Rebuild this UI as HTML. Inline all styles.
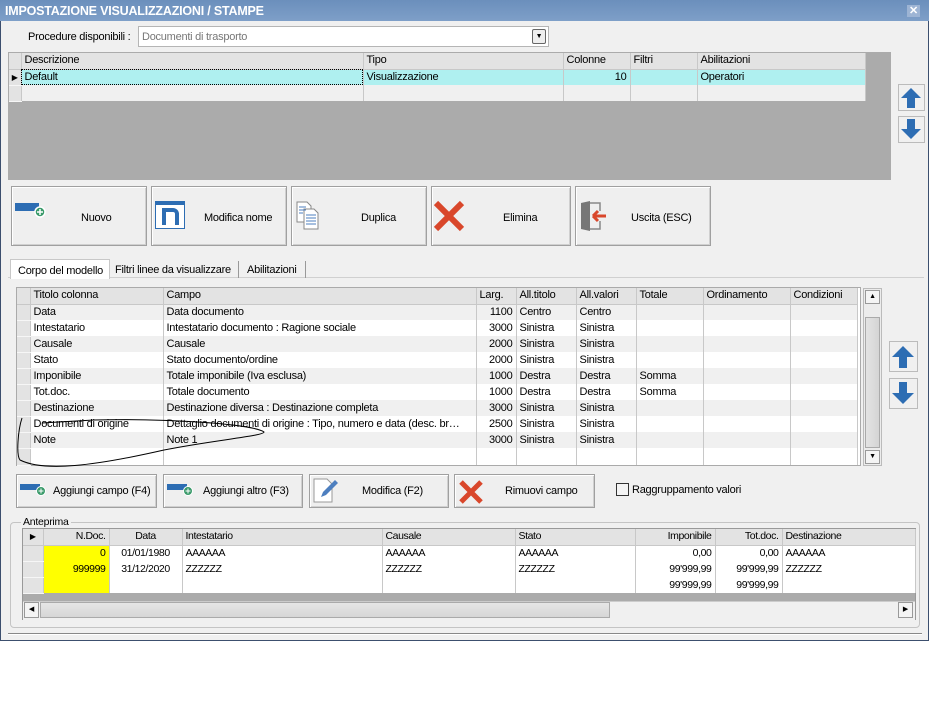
<!DOCTYPE html>
<html><head><meta charset="utf-8"><style>
*{box-sizing:border-box;margin:0;padding:0}
body{width:929px;height:703px;background:#fff;font-family:"Liberation Sans",sans-serif;font-size:11px;letter-spacing:-0.25px;color:#000;position:relative;overflow:hidden}
.a{position:absolute}
#win{left:0;top:0;width:929px;height:641px;background:#f0f0f0;border:1px solid #3c4f6e;border-top:none}
#title{left:0;top:0;width:929px;height:21px;background:linear-gradient(#6b8fbc,#7e9fc8);color:#fff;font-weight:bold;font-size:12.5px;line-height:22px;padding-left:5px;letter-spacing:-0.2px}
.btn{position:absolute;background:#efefef;border:1px solid #a0a0a0;box-shadow:inset 1px 1px 0 #fff,inset -1px -1px 0 #d0d0d0}
.btn span{position:absolute;top:50%;transform:translateY(-50%)}
table{border-collapse:collapse;table-layout:fixed;position:absolute}
td{border-right:1px solid #c8c8c8;height:16px;padding:0 3px;white-space:nowrap;overflow:hidden;line-height:15px}
tr.h td{background:#e3e3e3;border-bottom:1px solid #c8c8c8}
td.i{background:#e3e3e3;border-bottom:1px solid #f6f6f6;padding:0}
.r{text-align:right}
.sm td{font-size:10.5px;letter-spacing:-.4px}
</style></head><body>
<div id="win" class="a"></div>
<div id="title" class="a">IMPOSTAZIONE VISUALIZZAZIONI / STAMPE</div>
<div class="a" style="left:907px;top:5px;width:13px;height:12px;background:#9db4d4;color:#fff;font-weight:bold;font-size:11px;line-height:12px;text-align:center">✕</div>

<div class="a" style="left:28px;top:31px">Procedure disponibili :</div>
<div class="a" style="left:138px;top:26px;width:411px;height:21px;background:#fff;border:1px solid #b5b5b5;color:#777;padding:4px 3px">Documenti di trasporto</div>
<div class="a" style="left:532px;top:29px;width:14px;height:15px;border:1px solid #666;border-radius:2px;background:#eee;font-size:7px;text-align:center;line-height:13px">▼</div>

<div class="a" style="left:8px;top:52px;width:883px;height:128px;background:#ababab"></div>
<table style="left:9px;top:53px;width:856px">
<col style="width:12px"><col style="width:342px"><col style="width:200px"><col style="width:67px"><col style="width:67px"><col style="width:168px">
<tr class="h"><td class="i"></td><td>Descrizione</td><td>Tipo</td><td>Colonne</td><td>Filtri</td><td>Abilitazioni</td></tr>
<tr style="background:#aff0f0"><td class="i" style="font-size:8px;text-align:center">▶</td><td style="outline:1px dotted #000;outline-offset:-1px">Default</td><td>Visualizzazione</td><td class="r">10</td><td></td><td>Operatori</td></tr>
<tr style="background:#f0f0f0"><td class="i"></td><td></td><td></td><td></td><td></td><td></td></tr>
</table>

<svg class="a" style="left:898px;top:84px" width="27" height="60"><rect x=".5" y=".5" width="26" height="26" fill="#f0f0f0" stroke="#bbb"/><path d="M13 4 L23 14 H17 V24 H9 V14 H3Z" fill="#2d6db3"/><rect x=".5" y="32.5" width="26" height="26" fill="#f0f0f0" stroke="#bbb"/><path d="M13 55 L23 45 H17 V35 H9 V45 H3Z" fill="#2d6db3"/></svg>

<div class="btn" style="left:11px;top:186px;width:136px;height:60px"><svg class="a" style="left:3px;top:12px" width="32" height="22"><rect x="0" y="4" width="24" height="8" fill="#2d6db3"/><circle cx="25" cy="13" r="5" fill="#3a9a6a" stroke="#fff" stroke-width="1.5"/><path d="M22 13h6M25 10v6" stroke="#fff" stroke-width="1.5"/></svg><span style="left:69px;top:31px">Nuovo</span></div>
<div class="btn" style="left:151px;top:186px;width:136px;height:60px"><svg class="a" style="left:3px;top:14px" width="32" height="30"><rect x=".5" y=".5" width="29" height="27" fill="#fff" stroke="#2d6db3"/><rect x="0" y="0" width="30" height="4" fill="#2d6db3"/><path d="M9 24V9h9a4 4 0 0 1 4 4v11" fill="none" stroke="#2d6db3" stroke-width="4"/></svg><span style="left:52px;top:31px">Modifica nome</span></div>
<div class="btn" style="left:291px;top:186px;width:136px;height:60px"><svg class="a" style="left:4px;top:14px" width="32" height="30"><path d="M1 1h10l4 4v16H1z" fill="#fff" stroke="#888"/><path d="M8 8h10l4 4v16H8z" fill="#fff" stroke="#888"/><path d="M3 6h7M3 9h7M3 12h4M10 14h10M10 17h10M10 20h10M10 23h10" stroke="#4d7fbf"/></svg><span style="left:69px;top:31px">Duplica</span></div>
<div class="btn" style="left:431px;top:186px;width:140px;height:60px"><svg class="a" style="left:0px;top:12px" width="34" height="34"><path d="M4 4L30 30M30 4L4 30" stroke="#d9472b" stroke-width="6"/></svg><span style="left:71px;top:31px">Elimina</span></div>
<div class="btn" style="left:575px;top:186px;width:136px;height:60px"><svg class="a" style="left:3px;top:12px" width="32" height="34"><path d="M2 4L11 2V32L2 30Z" fill="#777"/><path d="M11 4h10v8M11 30h10v-8" fill="none" stroke="#888" stroke-width="1.5"/><path d="M14 17h13M14 17l5-5M14 17l5 5" stroke="#d9472b" stroke-width="3" fill="none"/></svg><span style="left:55px;top:31px">Uscita (ESC)</span></div>

<div class="a" style="left:8px;top:277px;width:916px;height:1px;background:#d0d0d0"></div>
<div class="a" style="left:10px;top:259px;width:100px;height:20px;background:#fff;border:1px solid #c8c8c8;border-bottom:none;padding:5px 0 0 7px">Corpo del modello</div>
<div class="a" style="left:111px;top:261px;width:128px;height:17px;border-right:1px solid #999;padding:3px 0 0 4px">Filtri linee da visualizzare</div>
<div class="a" style="left:241px;top:261px;width:65px;height:17px;border-right:1px solid #999;padding:3px 0 0 6px">Abilitazioni</div>

<div class="a" style="left:16px;top:287px;width:845px;height:179px;background:#fff;border:1px solid #aaa"></div>
<table style="left:17px;top:288px;width:840px">
<col style="width:13px"><col style="width:133px"><col style="width:313px"><col style="width:40px"><col style="width:60px"><col style="width:60px"><col style="width:67px"><col style="width:87px"><col style="width:67px">
<tr class="h"><td class="i"></td><td>Titolo colonna</td><td>Campo</td><td>Larg.</td><td>All.titolo</td><td>All.valori</td><td>Totale</td><td>Ordinamento</td><td>Condizioni</td></tr>
<tr style="background:#f0f0f0"><td class="i"></td><td>Data</td><td>Data documento</td><td class="r">1100</td><td>Centro</td><td>Centro</td><td></td><td></td><td></td></tr>
<tr style="background:#fff"><td class="i"></td><td>Intestatario</td><td>Intestatario documento : Ragione sociale</td><td class="r">3000</td><td>Sinistra</td><td>Sinistra</td><td></td><td></td><td></td></tr>
<tr style="background:#f0f0f0"><td class="i"></td><td>Causale</td><td>Causale</td><td class="r">2000</td><td>Sinistra</td><td>Sinistra</td><td></td><td></td><td></td></tr>
<tr style="background:#fff"><td class="i"></td><td>Stato</td><td>Stato documento/ordine</td><td class="r">2000</td><td>Sinistra</td><td>Sinistra</td><td></td><td></td><td></td></tr>
<tr style="background:#f0f0f0"><td class="i"></td><td>Imponibile</td><td>Totale imponibile (Iva esclusa)</td><td class="r">1000</td><td>Destra</td><td>Destra</td><td>Somma</td><td></td><td></td></tr>
<tr style="background:#fff"><td class="i"></td><td>Tot.doc.</td><td>Totale documento</td><td class="r">1000</td><td>Destra</td><td>Destra</td><td>Somma</td><td></td><td></td></tr>
<tr style="background:#f0f0f0"><td class="i"></td><td>Destinazione</td><td>Destinazione diversa : Destinazione completa</td><td class="r">3000</td><td>Sinistra</td><td>Sinistra</td><td></td><td></td><td></td></tr>
<tr style="background:#fff"><td class="i"></td><td>Documenti di origine</td><td>Dettaglio documenti di origine : Tipo, numero e data (desc. br…</td><td class="r">2500</td><td>Sinistra</td><td>Sinistra</td><td></td><td></td><td></td></tr>
<tr style="background:#f0f0f0"><td class="i"></td><td>Note</td><td>Note 1</td><td class="r">3000</td><td>Sinistra</td><td>Sinistra</td><td></td><td></td><td></td></tr>
<tr style="background:#fff"><td class="i" style="height:17px"></td><td></td><td></td><td></td><td></td><td></td><td></td><td></td><td></td></tr>
</table>
<div class="a" style="left:863px;top:288px;width:19px;height:178px;background:#ececec;border:1px solid #bbb"></div>
<div class="a" style="left:865px;top:290px;width:15px;height:14px;border:1px solid #999;background:#f4f4f4;font-size:7px;text-align:center;line-height:12px">▲</div>
<div class="a" style="left:865px;top:317px;width:15px;height:131px;border:1px solid #aaa;background:linear-gradient(90deg,#e4e4e4,#d4d4d4)"></div>
<div class="a" style="left:865px;top:450px;width:15px;height:14px;border:1px solid #999;background:#f4f4f4;font-size:7px;text-align:center;line-height:12px">▼</div>
<svg class="a" style="left:889px;top:341px" width="29" height="68"><rect x=".5" y=".5" width="28" height="30" fill="#f0f0f0" stroke="#bbb"/><path d="M14 5 L25 16 H18 V27 H10 V16 H3Z" fill="#2d6db3"/><rect x=".5" y="37.5" width="28" height="30" fill="#f0f0f0" stroke="#bbb"/><path d="M14 63 L25 52 H18 V41 H10 V52 H3Z" fill="#2d6db3"/></svg>

<svg class="a" style="left:14px;top:410px" width="270" height="62"><path d="M8 8 C4 20 2 45 6 50 C30 62 80 56 150 40 C200 30 250 26 250 22 C240 14 150 8 80 10 C60 11 45 12 28 13" fill="none" stroke="#000" stroke-width="1"/></svg>

<div class="btn" style="left:16px;top:474px;width:141px;height:34px"><svg class="a" style="left:3px;top:7px" width="28" height="16"><rect x="0" y="2" width="20" height="6" fill="#2d6db3"/><circle cx="21" cy="9" r="4.5" fill="#3a9a6a" stroke="#fff"/><path d="M18.5 9h5M21 6.5v5" stroke="#fff"/></svg><span style="left:36px">Aggiungi campo (F4)</span></div>
<div class="btn" style="left:163px;top:474px;width:140px;height:34px"><svg class="a" style="left:3px;top:7px" width="28" height="16"><rect x="0" y="2" width="20" height="6" fill="#2d6db3"/><circle cx="21" cy="9" r="4.5" fill="#3a9a6a" stroke="#fff"/><path d="M18.5 9h5M21 6.5v5" stroke="#fff"/></svg><span style="left:39px">Aggiungi altro (F3)</span></div>
<div class="btn" style="left:309px;top:474px;width:140px;height:34px"><svg class="a" style="left:3px;top:3px" width="26" height="26"><path d="M1 1h13l5 5v18H1z" fill="#fff" stroke="#999"/><path d="M8 19l2-5 12-12 3 3-12 12z" fill="#4d7fbf"/></svg><span style="left:52px">Modifica (F2)</span></div>
<div class="btn" style="left:454px;top:474px;width:141px;height:34px"><svg class="a" style="left:2px;top:3px" width="28" height="28"><path d="M4 4L24 24M24 4L4 24" stroke="#d9472b" stroke-width="5"/></svg><span style="left:50px">Rimuovi campo</span></div>
<div class="a" style="left:616px;top:483px;width:13px;height:13px;border:1px solid #333;background:#f4f4f4"></div>
<div class="a" style="left:632px;top:484px">Raggruppamento valori</div>

<div class="a" style="left:10px;top:522px;width:910px;height:106px;border:1px solid #c4c4c4;border-radius:4px"></div>
<div class="a" style="left:21px;top:516px;background:#f0f0f0;padding:0 2px;font-size:10.5px">Anteprima</div>
<div class="a" style="left:22px;top:528px;width:894px;height:92px;background:#ababab;border:1px solid #999"></div>
<table class="sm" style="left:23px;top:529px;width:892px">
<col style="width:20px"><col style="width:66px"><col style="width:73px"><col style="width:200px"><col style="width:133px"><col style="width:120px"><col style="width:80px"><col style="width:67px"><col style="width:133px">
<tr class="h"><td class="i" style="font-size:8px;text-align:center">▶</td><td class="r">N.Doc.</td><td style="text-align:center">Data</td><td>Intestatario</td><td>Causale</td><td>Stato</td><td class="r">Imponibile</td><td class="r">Tot.doc.</td><td>Destinazione</td></tr>
<tr style="background:#fff"><td class="i"></td><td class="r" style="background:#ffff00">0</td><td style="text-align:center">01/01/1980</td><td>AAAAAA</td><td>AAAAAA</td><td>AAAAAA</td><td class="r">0,00</td><td class="r">0,00</td><td>AAAAAA</td></tr>
<tr style="background:#fff"><td class="i"></td><td class="r" style="background:#ffff00">999999</td><td style="text-align:center">31/12/2020</td><td>ZZZZZZ</td><td>ZZZZZZ</td><td>ZZZZZZ</td><td class="r">99'999,99</td><td class="r">99'999,99</td><td>ZZZZZZ</td></tr>
<tr style="background:#fff"><td class="i"></td><td style="background:#ffff00"></td><td></td><td></td><td></td><td></td><td class="r">99'999,99</td><td class="r">99'999,99</td><td></td></tr>
</table>
<div class="a" style="left:23px;top:601px;width:892px;height:19px;background:#f0f0f0;border-top:1px solid #ccc"></div>
<div class="a" style="left:24px;top:602px;width:15px;height:16px;border:1px solid #999;background:#f4f4f4;font-size:7px;text-align:center;line-height:14px">◀</div>
<div class="a" style="left:40px;top:602px;width:570px;height:16px;border:1px solid #aaa;background:linear-gradient(#e6e6e6,#d6d6d6)"></div>
<div class="a" style="left:898px;top:602px;width:15px;height:16px;border:1px solid #999;background:#f4f4f4;font-size:7px;text-align:center;line-height:14px">▶</div>
<div class="a" style="left:8px;top:633px;width:914px;height:2px;border-top:1px solid #888;border-bottom:1px solid #fff"></div>
</body></html>
